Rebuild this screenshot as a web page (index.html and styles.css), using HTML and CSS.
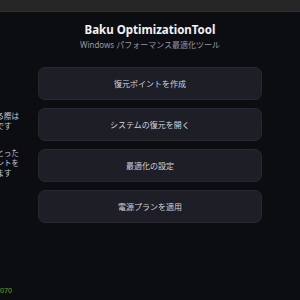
FILE: index.html
```html
<!DOCTYPE html>
<html lang="ja">
<head>
    <meta charset="UTF-8">
    <meta name="viewport" content="width=device-width, initial-scale=1.0">
    <title>Baku OptimizationTool</title>
    <link rel="stylesheet" href="styles.css">
</head>
<body>
    <div class="titlebar"></div>
    <div class="app">
        <aside class="side">
            <p class="side__note">最適化を実行する際は<br>管理権限が必要です</p>
            <p class="side__note">変更を行う前にとった<br>事前に復元ポイントを<br>作成をお勧めします</p>
            <p class="side__status">Port 5070</p>
        </aside>
        <main class="main">
            <header class="main__header">
                <h1 class="main__title">Baku OptimizationTool</h1>
                <p class="main__subtitle">Windows パフォーマンス最適化ツール</p>
            </header>
            <div class="main__actions">
                <button class="action">復元ポイントを作成</button>
                <button class="action">システムの復元を開く</button>
                <button class="action">最適化の設定</button>
                <button class="action">電源プランを適用</button>
            </div>
        </main>
        <div class="spacer"></div>
    </div>
</body>
</html>
```

FILE: styles.css
```css
body {
    margin: 0;
    padding: 0;
    background-color: #0c0d11;
    color: #e6e6ec;
    font-family: "Noto Sans", "Noto Sans CJK JP", sans-serif;
    overflow: hidden;
    height: 100vh;
}
.titlebar {
    height: 11px;
    background-color: #262626;
    border-bottom: 1px solid #303030;
}
.app {
    display: flex;
    height: calc(100vh - 12px);
}
/* barra lateral casi fuera de la ventana */
.side {
    flex: none;
    width: 120px;
    margin-left: -100px;
    display: flex;
    flex-direction: column;
    padding-top: 99px;
    padding-left: 44px;
    box-sizing: border-box;
    overflow: hidden;
}
.side__note {
    margin: 0 0 17px 0;
    font-size: 7.5px;
    line-height: 10px;
    color: #c9c9d2;
    white-space: nowrap;
}
.side__status {
    margin: auto 0 5px 0;
    font-size: 7px;
    color: #6fa612;
    white-space: nowrap;
    text-align: right;
    padding-right: 8px;
}
.main {
    flex: 1;
    display: flex;
    flex-direction: column;
    align-items: center;
}
.spacer {
    flex: none;
    width: 20px;
}
.main__header {
    text-align: center;
    padding-top: 10px;
}
.main__title {
    margin: 0;
    font-size: 11.5px;
    font-weight: 700;
    line-height: 16px;
    color: #f2f2f6;
}
.main__subtitle {
    margin: 1px 0 0 0;
    font-size: 8px;
    line-height: 12px;
    color: #9797a3;
}
.main__actions {
    display: flex;
    flex-direction: column;
    gap: 8px;
    margin-top: 16px;
}
.action {
    width: 224px;
    height: 33px;
    background-color: #1e1e26;
    border: 1px solid #272731;
    border-radius: 7px;
    color: #d4d4dc;
    font-family: "Noto Sans", "Noto Sans CJK JP", sans-serif;
    font-size: 8px;
    cursor: pointer;
}
```
